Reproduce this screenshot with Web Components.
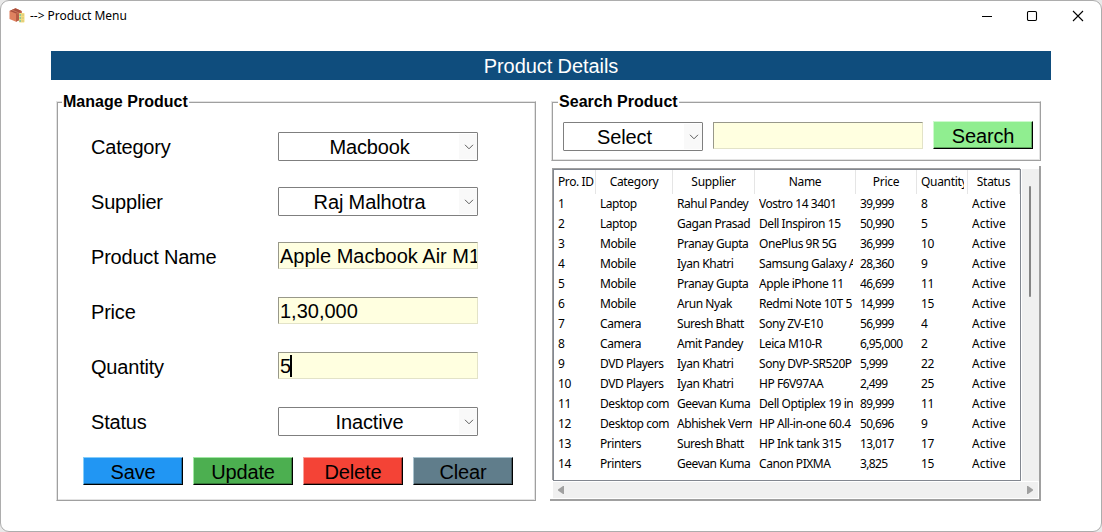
<!DOCTYPE html>
<html lang="en">
<head>
<meta charset="utf-8">
<title>Product Menu</title>
<style>
html,body{margin:0;height:100%;background:#e9e9e9;overflow:hidden}
body{font-family:"Liberation Sans",Arial,sans-serif;color:#000}
</style>
</head>
<body>
<product-window></product-window>
<script>
const define = (name, html, setup) => customElements.define(name, class extends HTMLElement {
  constructor(){
    super();
    const t = document.createElement('template');
    t.innerHTML = html;
    this.attachShadow({mode:'open'}).append(t.content.cloneNode(true));
    if (setup) setup(this, this.shadowRoot);
  }
});

define('title-bar', `<style>
:host{display:flex;align-items:center;height:29px;padding-left:8px;font:12px "Noto Sans",sans-serif}
.icon{width:17px;height:16px;flex:none;margin-right:4px}
.name{flex:1;letter-spacing:-.04px;white-space:pre}
.ctl{width:46px;display:flex;justify-content:center}
.ctls{display:flex}
.ctl svg{display:block}
</style>
<svg class="icon" viewBox="0 0 17 16"><path d="M6.5 .3 12.6 3v8L7 13.8 .5 11V3z" fill="#df8260"/><path d="M6.5 .3 12.6 3 7 5.5 .5 3z" fill="#a9503e"/><path d="M7 5.5 12.6 3v8L7 13.8z" fill="#b85c45"/><path d="m3 2 6 2.5v2" fill="none" stroke="#c9755b" stroke-width="1"/><rect x="10" y="5" width="5.5" height="9.5" rx=".7" fill="#f1dc84"/><path d="M10.5 7h1.3m-1.3 3h1.3m-1.3 3h1.3" stroke="#46b7b0" stroke-width="1.5"/><path d="M12.5 7h2.5m-2.5 3H15m-2.5 3H15" stroke="#d9c56f"/></svg>
<span class="name">--&gt; Product Menu</span>
<div class="ctls">
<div class="ctl"><svg width="12" height="12"><path d="M2 6.5h10" stroke="#000"/></svg></div>
<div class="ctl"><svg width="12" height="12"><rect x="1.5" y="1.5" width="9" height="9" rx="1.2" fill="none" stroke="#000" stroke-width="1.1"/></svg></div>
<div class="ctl"><svg width="12" height="12"><path d="m1 1 10 10M11 1 1 11" stroke="#000" stroke-width="1.1"/></svg></div>
</div>`);

define('group-frame', `<style>
:host{display:block;box-sizing:border-box;position:relative;border:1px solid;border-color:#e3e3e3 #a0a0a0 #a0a0a0 #e3e3e3;box-shadow:inset 1px 1px #a0a0a0,inset -1px -1px #e3e3e3}
b{position:absolute;left:var(--label-x,5px);top:-10px;font-size:16px;line-height:19px;background:#fff;padding:0 1px;white-space:nowrap;letter-spacing:.03px}
</style><b></b><slot></slot>`, (h, r) => r.querySelector('b').textContent = h.getAttribute('label'));

define('combo-box', `<style>
:host{display:flex;box-sizing:border-box;width:200px;height:29px;border:1px solid #7f7f7f;border-radius:1px;background:#fff;font-size:20px;line-height:28px;letter-spacing:-.13px}
span{flex:1;text-align:center;padding-left:1px;white-space:nowrap}
i{width:18px;margin:1px 0;background:#f9f9f9;display:flex;align-items:center;justify-content:center}
svg{margin-left:2px}
</style><span><slot></slot></span><i><svg width="10" height="6"><path d="M1 .8 5 4.8 9 .8" fill="none" stroke="#5c5c5c"/></svg></i>`);

define('text-entry', `<style>
:host{display:block;box-sizing:border-box;width:200px;height:27px;margin-bottom:2px;border:1px solid;border-color:#98988a #e3e3c8 #e3e3c8 #98988a;background:#ffffe0;font-size:20px;line-height:26px;padding-left:1px;overflow:hidden;white-space:nowrap}
:host([caret]) span{display:inline-block;height:22px;vertical-align:top;margin-top:2px;line-height:22px;border-right:2px solid #000;letter-spacing:-1px}
</style><span><slot></slot></span>`);

define('form-row', `<style>
:host{display:flex;align-items:flex-start;height:55px}
label{width:187px;font-size:20px;line-height:31px;height:29px;letter-spacing:-.2px}
</style><label></label><slot></slot>`, (h, r) => r.querySelector('label').textContent = h.getAttribute('label'));

define('push-button', `<style>
:host{display:block;box-sizing:border-box;width:100px;height:28px;border:1px solid;border-color:var(--hi) #000 #000 var(--hi);box-shadow:inset -1px -1px var(--lo);background:var(--bg);text-align:center;font-size:20px;line-height:28px;letter-spacing:-.15px}
</style><slot></slot>`);

const columns = [['Pro. ID',42],['Category',77],['Supplier',82],['Name',101],['Price',61],['Quantity',51],['Status',52]];
const rows = `1|Laptop|Rahul Pandey|Vostro 14 3401|39,999|8
2|Laptop|Gagan Prasad|Dell Inspiron 15|50,990|5
3|Mobile|Pranay Gupta|OnePlus 9R 5G|36,999|10
4|Mobile|Iyan Khatri|Samsung Galaxy A|28,360|9
5|Mobile|Pranay Gupta|Apple iPhone 11|46,699|11
6|Mobile|Arun Nyak|Redmi Note 10T 5|14,999|15
7|Camera|Suresh Bhatt|Sony ZV-E10|56,999|4
8|Camera|Amit Pandey|Leica M10-R|6,95,000|2
9|DVD Players|Iyan Khatri|Sony DVP-SR520P|5,999|22
10|DVD Players|Iyan Khatri|HP F6V97AA|2,499|25
11|Desktop com|Geevan Kuma|Dell Optiplex 19 in|89,999|11
12|Desktop com|Abhishek Verm|HP All-in-one 60.4|50,696|9
13|Printers|Suresh Bhatt|HP Ink tank 315|13,017|17
14|Printers|Geevan Kuma|Canon PIXMA|3,825|15`.split('\n').map(l => (l + '|Active').split('|'));

define('product-table', `<style>
:host{display:grid;box-sizing:border-box;grid-template:1fr 18px/1fr 18px;width:491px;height:335px;border:solid #a0a0a0;border-width:0 2px 2px 0;padding:3px 0 0 3px;font:12px "Noto Sans",sans-serif}
.view{border:1px solid #828790;background:#fff;overflow:hidden;box-shadow:-1px -1px #a0a0a0}
.grid{display:grid;grid-template-columns:${columns.map(c => c[1] + 'px').join(' ')};grid-auto-rows:20px}
.grid div{white-space:nowrap;overflow:hidden;letter-spacing:-.45px}
.grid.head{height:24px}
.grid.head div{height:24px;line-height:24px;text-align:center;border-right:1px solid #e5e5e5;padding:0 3px 0 3px;box-sizing:border-box;letter-spacing:-.3px}
.grid.head div:first-child{letter-spacing:-.4px;padding:0 0 0 4px;text-align:left}
.grid.head div:nth-child(6){padding-left:4px;text-align:left}
.head span{display:block;overflow:hidden}
.row div{line-height:20px;margin:0 3px 0 4px}
.row div:nth-child(7n+5){letter-spacing:-.65px}
.row div:nth-child(7n){letter-spacing:0}
.v{background:#f0f0f0;margin-left:1px;display:flex;justify-content:center}
.v i{width:2px;height:111px;margin-top:17px;margin-right:1px;background:#858585;border-radius:1px}
.h{grid-column:1/3;background:#f0f0f0;margin:1px 1px 1px 0;display:flex;align-items:center;justify-content:space-between;padding:0 4px}
</style><div class="view"><div class="grid head"></div><div class="grid row"></div></div><div class="v"><i></i></div>
<div class="h"><svg width="7" height="8"><path d="M7 0v8H6L1 4.5v-1L6 0z" fill="#a0a0a0"/></svg><svg width="7" height="8"><path d="M0 0v8h1L6 4.5v-1L1 0z" fill="#a0a0a0"/></svg></div>`, (h, r) => {
  const add = (sel, text) => { const d = document.createElement('div'); const s = document.createElement('span'); s.textContent = text; d.append(s); r.querySelector(sel).append(d); };
  columns.forEach(c => add('.head', c[0]));
  rows.flat().forEach(c => add('.row', c));
});

define('product-window', `<style>
:host{display:block;box-sizing:border-box;width:1102px;height:532px;background:#fff;border:1px solid #adadad;border-radius:9px}
header{margin:21px 50px 0;height:29px;background:#0f4d7d;color:#fff;text-align:center;font-size:20px;line-height:30px;letter-spacing:-.08px}
main{display:flex;margin:21px 60px 0 55px;justify-content:space-between}
.left{width:480px;height:400px}
.form{padding:30px 0 0 34px}
.btns{display:flex;gap:10px;padding-left:26px;margin-top:-5px}
.right{width:491px}
.search{height:60px;margin-left:1px;--label-x:6px}
.bar{display:flex;padding:19px 0 0 11px}
.bar combo-box{width:140px;margin:1px 10px 0 0}
.bar text-entry{width:210px;margin:1px 10px 0 0}
product-table{margin-top:5px}
</style>
<title-bar></title-bar>
<header>Product Details</header>
<main>
<group-frame class="left" label="Manage Product">
<div class="form">
<form-row label="Category"><combo-box>Macbook</combo-box></form-row>
<form-row label="Supplier"><combo-box>Raj Malhotra</combo-box></form-row>
<form-row label="Product Name"><text-entry>Apple Macbook Air M1</text-entry></form-row>
<form-row label="Price"><text-entry>1,30,000</text-entry></form-row>
<form-row label="Quantity"><text-entry caret>5</text-entry></form-row>
<form-row label="Status"><combo-box>Inactive</combo-box></form-row>
</div>
<div class="btns">
<push-button style="--bg:#2196f3;--hi:#84cdfa;--lo:#166ba8">Save</push-button>
<push-button style="--bg:#4caf50;--hi:#a0e8a3;--lo:#347a38">Update</push-button>
<push-button style="--bg:#f44336;--hi:#faa099;--lo:#a82f26">Delete</push-button>
<push-button style="--bg:#607d8b;--hi:#a9c2cd;--lo:#43575f">Clear</push-button>
</div>
</group-frame>
<div class="right">
<group-frame class="search" label="Search Product"><div class="bar">
<combo-box>Select</combo-box><text-entry></text-entry><push-button style="--bg:#90ee90;--hi:#cdfacd;--lo:#5fa65f">Search</push-button>
</div></group-frame>
<product-table></product-table>
</div>
</main>`);
</script>
</body>
</html>
